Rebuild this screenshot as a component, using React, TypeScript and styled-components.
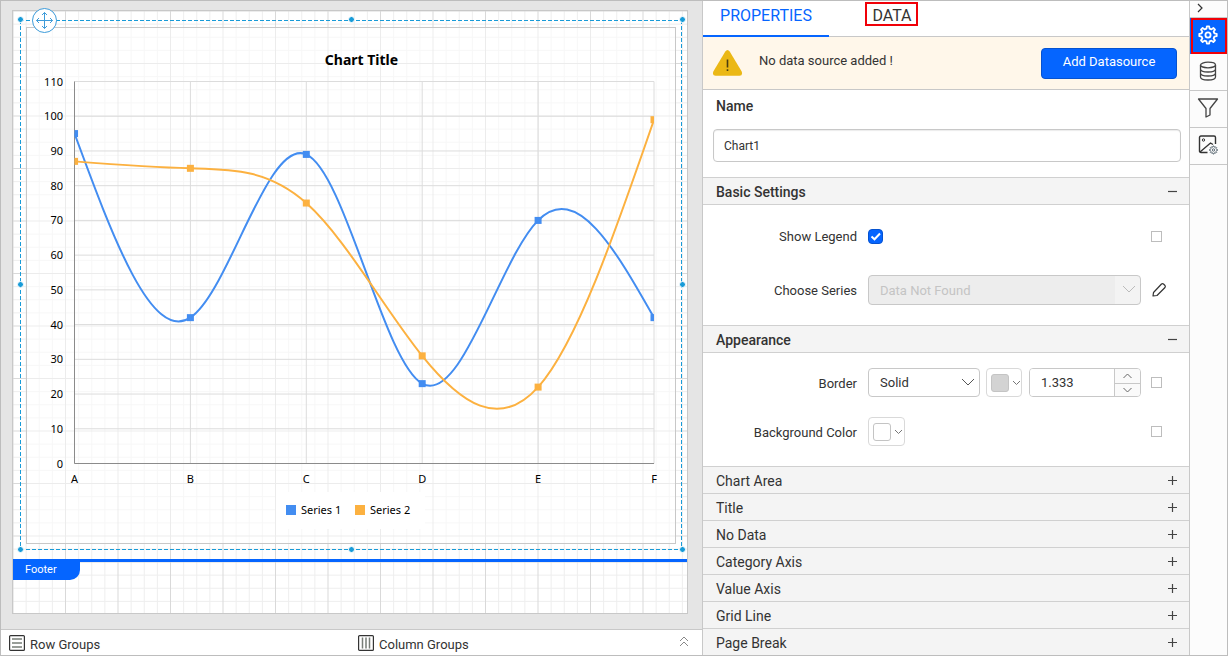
import React, { useId, useState } from "react";
import styled, { createGlobalStyle, css } from "styled-components";

const GlobalStyle = createGlobalStyle`
  *, *::before, *::after { box-sizing: border-box; }
  body { margin: 0; background: #fff; color: #333; font-family: Roboto, "Liberation Sans", sans-serif; font-size: 13px; }
  button, input, select { font: inherit; color: inherit; margin: 0; }
  button { cursor: pointer; padding: 0; border: 0; background: none; }
`;

const line = "#c8c8c8";
const blue = "#0565ff";

/* ---------- Shell ---------- */

const Shell = styled.div`
  display: flex;
  min-height: 100vh;
  border: 1px solid #bdbdbd;
`;

const Workspace = styled.main`
  flex: 1;
  min-width: 0;
  display: flex;
  flex-direction: column;
`;

const Canvas = styled.div`
  flex: 1;
  padding: 9px 14px 15px 11px;
  background: #e5e5e5;
`;

const Paper = styled.div`
  border: 1px solid ${line};
  background: #fff;
`;

const Band = styled.section`
  position: relative;
`;

const BodyBand = styled(Band)`
  padding: 9px 5px 9px 7px;
`;

const FooterBand = styled(Band)`
  height: 54px;
  border-top: 3px solid ${blue};
`;

const FooterTag = styled.div`
  position: relative;
  width: 67px;
  height: 18px;
  padding-left: 12px;
  border-bottom-right-radius: 10px;
  background: ${blue};
  color: #fff;
  font-size: 11px;
  line-height: 15px;
`;

const GridSvg = styled.svg`
  position: absolute;
  inset: 0;
  width: 100%;
  height: 100%;
`;

const dash = (angle: string) =>
  `repeating-linear-gradient(${angle}, #189bd8 0 4px, transparent 4px 6px)`;

const Selection = styled.div`
  position: relative;
  padding: 7px 6px 6px;
  background:
    ${dash("90deg")} top / 100% 1px no-repeat,
    ${dash("90deg")} bottom / 100% 1px no-repeat,
    ${dash("180deg")} left / 1px 100% no-repeat,
    ${dash("180deg")} right / 1px 100% no-repeat;
`;

const Handle = styled.span<{ $x: string; $y: string }>`
  position: absolute;
  left: ${(p) => p.$x};
  top: ${(p) => p.$y};
  width: 7px;
  height: 7px;
  margin: -4px 0 0 -3px;
  border: 1px solid #fff;
  border-radius: 50%;
  background: #189bd8;
`;

const MoveHandle = styled.button`
  position: absolute;
  left: 12px;
  top: -12px;
  width: 25px;
  height: 25px;
  svg { display: block; }
`;

const ChartFrame = styled.div`
  border: 1px solid ${line};
  background: rgba(255, 255, 255, 0.5);
  svg { display: block; width: 100%; height: auto; }
`;

const AxisText = styled.text`
  font-family: "Noto Sans", sans-serif;
  font-size: 11px;
  fill: #000;
`;

const TitleText = styled.text`
  font-family: "Noto Sans", sans-serif;
  font-size: 14px;
  font-weight: 700;
  fill: #000;
`;

const GroupBar = styled.div`
  position: relative;
  display: grid;
  grid-template-columns: 1fr 1fr;
  height: 26px;
  padding-right: 3px;
  border-top: 1px solid ${line};
  background: #fff;
`;

const Group = styled.div`
  display: flex;
  align-items: center;
  gap: 5px;
  padding: 4px 8px 0;
  line-height: 16px;
  svg { margin-top: -4px; }
`;

const CollapseButton = styled.button`
  position: absolute;
  right: 12px;
  top: 5px;
  width: 12px;
  height: 14px;
  svg { display: block; }
`;

/* ---------- Property panel ---------- */

const Panel = styled.aside`
  display: flex;
  flex-direction: column;
  width: 488px;
  flex: none;
  border: solid ${line};
  border-width: 0 1px;
  background: #fff;
`;

const Tabs = styled.div`
  display: flex;
  height: 36px;
  flex: none;
  border-bottom: 1px solid ${line};
`;

const Tab = styled.button<{ $active?: boolean }>`
  position: relative;
  width: 126px;
  height: 36px;
  padding-bottom: 8px;
  font-size: 16px;
  ${(p) => p.$active && css`
    color: ${blue};
    border-bottom: 2px solid ${blue};
    padding-bottom: 6px;
  `}
`;

const TabMark = styled.span`
  position: absolute;
  inset: 1px 37px 11px 36px;
  border: 2px solid #f00008;
`;

const Banner = styled.div`
  display: flex;
  align-items: center;
  gap: 16px;
  height: 53px;
  flex: none;
  padding: 0 12px 0 10px;
  border-bottom: 1px solid ${line};
  background: #fff7ea;
`;

const BannerText = styled.p`
  flex: 1;
  margin: 0;
  padding-bottom: 6px;
`;

const PrimaryButton = styled.button`
  width: 136px;
  height: 31px;
  padding-bottom: 3px;
  border: 1px solid #0552d0;
  border-radius: 4px;
  background: ${blue};
  color: #fff;
`;

const NameField = styled.div`
  display: flex;
  flex-direction: column;
  gap: 15px;
  padding: 8px 8px 15px 10px;
  label { padding-left: 3px; font-size: 14px; font-weight: 500; line-height: 16px; }
`;

const TextInput = styled.input`
  width: 100%;
  height: 33px;
  padding: 0 10px;
  border: 1px solid ${line};
  border-radius: 4px;
  box-shadow: inset 0 1px 1px rgba(0, 0, 0, 0.08);
  font-size: 12px;
`;

const SectionHead = styled.button<{ $open?: boolean }>`
  display: flex;
  align-items: center;
  justify-content: space-between;
  width: 100%;
  padding: 1px 12px 0 13px;
  border-top: 1px solid #d0d0d0;
  background: #f4f4f4;
  font-size: 14px;
  line-height: 16px;
  text-align: left;
  ${(p) => p.$open
    ? css`
      flex: none;
      height: 28px;
      border-bottom: 1px solid #d0d0d0;
      font-weight: 500;
    `
    : css`
      flex: 1;
      min-height: 27px;
      max-height: 28px;
    `}
  svg { flex: none; }
`;

const SectionBody = styled.div<{ $roomy?: boolean }>`
  display: grid;
  ${(p) => p.$roomy
    ? css`gap: 24px; padding: 16px 0 20px; grid-auto-rows: 30px;`
    : css`gap: 20px; padding: 15px 0 20px; grid-auto-rows: 29px;`}
`;

const Row = styled.div`
  display: grid;
  grid-template-columns: 154px 11px 1fr 10px 16px;
  align-items: center;
  padding-right: 22px;
`;

const Label = styled.label`
  padding-top: 2px;
  text-align: right;
  line-height: 16px;
`;

const Controls = styled.div`
  grid-column: 3;
  display: flex;
  align-items: center;
`;

const Trailing = styled.div`
  grid-column: 5;
  display: flex;
  align-items: center;
`;

const Check = styled.input`
  appearance: none;
  width: 15px;
  height: 15px;
  border: 1px solid #0552d0;
  border-radius: 4px;
  background: ${blue};
`;

const CheckWrap = styled.span`
  position: relative;
  display: flex;
  svg { position: absolute; inset: 0; pointer-events: none; }
  input:not(:checked) { background: #fff; }
`;

const ResetBox = styled.input`
  appearance: none;
  width: 11px;
  height: 11px;
  border: 1px solid #bdbdbd;
  background: #fff;
`;

const SelectWrap = styled.span<{ $wide?: boolean }>`
  position: relative;
  display: flex;
  ${(p) => (p.$wide ? "flex: 1;" : "width: 112px; margin-right: 6px;")}
`;

const Select = styled.select`
  appearance: none;
  width: 100%;
  height: 29px;
  padding: 0 30px 0 11px;
  border: 1px solid ${line};
  border-radius: 4px;
  background: #fff;
  &:disabled {
    height: 30px;
    background: linear-gradient(#f3f3f3, #f3f3f3) right / 25px 100% no-repeat #ededed;
    color: #c4c4c4;
    opacity: 1;
  }
`;

const SelectArrow = styled.svg`
  position: absolute;
  right: 5px;
  top: 10px;
  pointer-events: none;
`;

const ColorButton = styled.button<{ $width: number }>`
  display: flex;
  align-items: center;
  gap: 3px;
  width: ${(p) => p.$width}px;
  height: 29px;
  padding-left: 4px;
  margin-right: 7px;
  border: 1px solid #d9d9d9;
  border-radius: 4px;
`;

const Swatch = styled.span<{ $color: string }>`
  width: 18px;
  height: 18px;
  border: 1px solid #c4c4c4;
  border-radius: 3px;
  background: ${(p) => p.$color};
`;

const Stepper = styled.span`
  display: grid;
  grid-template-columns: 1fr 26px;
  grid-template-rows: 14px 13px;
  flex: 1;
  min-width: 0;
  height: 29px;
  border: 1px solid ${line};
  border-radius: 4px;
  overflow: hidden;
  input {
    grid-row: 1 / 3;
    min-width: 0;
    width: 100%;
    padding: 0 11px;
    border: 0;
    appearance: textfield;
  }
  input::-webkit-inner-spin-button { appearance: none; }
  button {
    display: flex;
    align-items: center;
    justify-content: center;
    border-left: 1px solid ${line};
    background: #fafafa;
  }
  button + button { border-top: 1px solid ${line}; }
`;

const IconButton = styled.button`
  display: flex;
`;

/* ---------- Tool rail ---------- */

const Rail = styled.nav`
  width: 37px;
  flex: none;
  background: #fcfcfc;
`;

const RailToggle = styled.button`
  display: flex;
  align-items: center;
  width: 100%;
  height: 17px;
  padding: 0 0 2px 7px;
  border-bottom: 1px solid ${line};
`;

const RailItem = styled.button<{ $active?: boolean }>`
  position: relative;
  display: flex;
  align-items: center;
  justify-content: center;
  width: 100%;
  height: 37px;
  padding: 0 2px 2px 0;
  border-bottom: 1px solid ${line};
  ${(p) => p.$active && css`
    height: 36px;
    border-bottom: 0;
    background: ${blue};
  `}
`;

const RailMark = styled.span`
  position: absolute;
  inset: 0 0 0 1px;
  border: 2px solid #f00008;
`;

/* ---------- Icons ---------- */

const Chevron = ({ w = 13, h = 8, color = "#777" }) => (
  <svg width={w} height={h} viewBox={`0 0 ${w} ${h}`} fill="none" stroke={color}>
    <path d={`M1 1 L${w / 2} ${h - 1.5} L${w - 1} 1`} />
  </svg>
);

const Toggle = ({ open }: { open?: boolean }) => (
  <svg width="9" height="10" viewBox="0 0 9 10" fill="none" stroke="#444" strokeWidth={1.2}>
    <path d={open ? "M0 4.5H9" : "M0 4.5H9M4.5 0V9"} />
  </svg>
);

const gearPath = (cx: number, cy: number, outer: number, inner: number) => {
  const teeth = 8;
  const points: string[] = [];
  for (let i = 0; i < teeth; i++) {
    [[-0.3, inner], [-0.17, outer], [0.17, outer], [0.3, inner]].forEach(([o, r]) => {
      const a = ((i + o) / teeth) * Math.PI * 2;
      points.push(`${(cx + r * Math.sin(a)).toFixed(2)} ${(cy - r * Math.cos(a)).toFixed(2)}`);
    });
  }
  return `M${points.join("L")}Z`;
};

const GearIcon = () => (
  <svg width="20" height="20" viewBox="0 0 20 20" fill="none" stroke="#fff" strokeWidth={1.8} strokeLinejoin="round">
    <path d={gearPath(10, 10, 8.8, 6.6)} />
    <circle cx="10" cy="10" r="2.6" />
  </svg>
);

const DatabaseIcon = () => (
  <svg width="18" height="20" viewBox="0 0 18 20" fill="none" stroke="#444" strokeWidth={1.3}>
    <ellipse cx="9" cy="4" rx="7.5" ry="2.8" />
    <path d="M1.5 4V16C1.5 20 16.5 20 16.5 16V4M1.5 8C1.5 12 16.5 12 16.5 8M1.5 12C1.5 16 16.5 16 16.5 12" />
  </svg>
);

const FilterIcon = () => (
  <svg width="22" height="20" viewBox="0 0 22 20" fill="none" stroke="#444" strokeWidth={1.3} strokeLinejoin="round">
    <path d="M1.5 1H20.5L13 10.5V17L9 19V10.5Z" />
  </svg>
);

const ImageGearIcon = () => (
  <svg width="20" height="20" viewBox="0 0 20 20" fill="none" stroke="#333" strokeWidth={1.4}>
    <path d="M9.500 17.500H3Q1.500 17.500 1.500 16V2.500Q1.500 1 3 1H16Q17.500 1 17.500 2.500V9" />
    <circle cx="5.500" cy="5" r="1.200" strokeWidth="1" />
    <path d="M2 17L12.500 8L15 9.500" />
    <path d={gearPath(15.5, 15, 4, 3)} stroke="#5d6b75" strokeWidth="1" />
    <circle cx="15.500" cy="15" r="1.200" stroke="#5d6b75" strokeWidth="1" />
  </svg>
);

const PencilIcon = () => (
  <svg width="16" height="16" viewBox="0 0 16 16" fill="none" stroke="#333" strokeWidth={1.2} strokeLinejoin="round">
    <path d="M2 14L2.500 10.500L10.500 2Q11.500 1.200 12.500 2L14 3.500Q14.700 4.500 14 5.500L6 13.500Z" />
  </svg>
);

const WarningIcon = () => (
  <svg width="30" height="28" viewBox="0 0 30 28">
    <path d="M12.300 2.500Q14.500 -.5 16.700 2.500L28.700 22.500Q30 26.500 26.500 26.700H2.500Q-1 26.500 .3 22.500Z" fill="#ebb815" />
    <path d="M14.500 10.500V18.500M14.500 20.200V22" stroke="#4b3e10" strokeWidth="1.600" />
  </svg>
);

const GroupIcon = ({ vertical }: { vertical?: boolean }) => (
  <svg width="16" height="16" viewBox="1 1 16 16" fill="none" stroke="#333">
    <rect x="1.600" y="1.600" width="14.800" height="14.800" rx="1" strokeWidth="1.200" />
    <path
      d={vertical ? "M5.500 3.500V14.500M9 3.500V14.500M12.500 3.500V14.500" : "M4 5H14M4 9H14M4 13H14"}
      stroke="#777d77"
      strokeWidth="1.500"
    />
  </svg>
);

const MoveIcon = () => (
  <svg width="25" height="25" viewBox="0 0 25 25" fill="none" stroke="#3d9bd9">
    <circle cx="12.500" cy="12.500" r="12" fill="#fff" />
    <path d="M12.500 4.500V20.500M4.500 12.500H20.500M10 7L12.500 4.500L15 7M10 18L12.500 20.500L15 18M7 10L4.500 12.500L7 15M18 10L20.500 12.500L18 15" />
  </svg>
);

/* ---------- Design grid ---------- */

const DesignGrid = () => {
  const id = useId();
  const cell = 13.125;
  const minor = [1, 2, 3, 5, 6, 7].map((n) => n * cell);
  return (
    <GridSvg aria-hidden="true">
      <defs>
        <pattern id={id} width="105" height="105" patternUnits="userSpaceOnUse">
          {minor.map((p) => (
            <path key={p} d={`M${p} 0V105M0 ${p}H105`} stroke="#eeeeee" />
          ))}
          {[0, 52.5, 105].map((p) => (
            <path key={p} d={`M${p} 0V105M0 ${p}H105`} stroke="#d9d9d9" />
          ))}
        </pattern>
      </defs>
      <rect width="100%" height="100%" fill={`url(#${id})`} />
    </GridSvg>
  );
};

/* ---------- Chart ---------- */

const plot = { left: 47.5, top: 53.5, width: 579.5, height: 382 };
const categories = ["A", "B", "C", "D", "E", "F"];
const series = [
  { name: "Series 1", color: "#438df1", values: [95, 42, 89, 23, 70, 42] },
  { name: "Series 2", color: "#fcb140", values: [87, 85, 75, 31, 22, 99] },
];
const ticks = Array.from({ length: 12 }, (_, i) => i * 10);
const step = plot.width / (categories.length - 1);
const px = (i: number) => plot.left + i * step;
const py = (v: number) => plot.top + plot.height * (1 - v / 110);

/* Natural cubic spline through evenly spaced values, as Bezier segments. */
const splinePath = (v: number[]) => {
  const n = v.length;
  const m = new Array(n).fill(0);
  for (let pass = 0; pass < 60; pass++) {
    for (let i = 1; i < n - 1; i++) {
      m[i] = (6 * (v[i - 1] - 2 * v[i] + v[i + 1]) - m[i - 1] - m[i + 1]) / 4;
    }
  }
  let d = `M${px(0)} ${py(v[0])}`;
  for (let i = 0; i < n - 1; i++) {
    const rise = v[i + 1] - v[i];
    const start = rise - (2 * m[i] + m[i + 1]) / 6;
    const end = rise + (m[i] + 2 * m[i + 1]) / 6;
    d += `C${px(i + 1 / 3)} ${py(v[i] + start / 3)} ${px(i + 2 / 3)} ${py(v[i + 1] - end / 3)} ${px(i + 1)} ${py(v[i + 1])}`;
  }
  return d;
};

const Chart = () => (
  <svg viewBox="0 0 648 515" role="img" aria-label="Chart Title">
    <defs>
      <clipPath id="plot-area">
        <rect x={plot.left} y={plot.top} width={plot.width} height={plot.height} />
      </clipPath>
    </defs>
    <TitleText x="334.500" y="37" textAnchor="middle">Chart Title</TitleText>
    {ticks.map((t) => (
      <g key={t}>
        <path d={`M${plot.left} ${py(t)}H${plot.left + plot.width}`} stroke="#dcdcdc" />
        <AxisText x="36" y={py(t) + 4} textAnchor="end">{t}</AxisText>
      </g>
    ))}
    {categories.map((c, i) => (
      <g key={c}>
        <path d={`M${px(i)} ${plot.top}V${plot.top + plot.height}`} stroke="#dcdcdc" />
        <AxisText x={px(i)} y="455" textAnchor="middle">{c}</AxisText>
      </g>
    ))}
    <path
      d={`M${plot.left} ${plot.top}V${plot.top + plot.height}H${plot.left + plot.width}`}
      fill="none"
      stroke="#8b8b8b"
    />
    <g clipPath="url(#plot-area)">
      {series.map((s) => (
        <g key={s.name}>
          <path d={splinePath(s.values)} fill="none" stroke={s.color} strokeWidth="2" />
          {s.values.map((v, i) => (
            <rect key={i} x={px(i) - 3.5} y={py(v) - 3.5} width="7" height="7" fill={s.color} />
          ))}
        </g>
      ))}
    </g>
    <rect x="249" y="464" width="149" height="37" fill="#fff" />
    {series.map((s, i) => (
      <g key={s.name}>
        <rect x={259 + i * 69} y="477" width="10" height="10" fill={s.color} />
        <AxisText x={274 + i * 69} y="486">{s.name}</AxisText>
      </g>
    ))}
  </svg>
);

const handles = [
  ["0%", "0%"], ["50%", "0%"], ["100%", "0%"],
  ["0%", "50%"], ["100%", "50%"],
  ["0%", "100%"], ["50%", "100%"], ["100%", "100%"],
];

const closedSections = ["Chart Area", "Title", "No Data", "Category Axis", "Value Axis", "Grid Line", "Page Break"];

export default function App() {
  const [name, setName] = useState("Chart1");
  const [legend, setLegend] = useState(true);
  const [width, setWidth] = useState(1.333);

  return (
    <>
      <GlobalStyle />
      <Shell>
        <Workspace>
          <Canvas>
            <Paper>
              <BodyBand>
                <DesignGrid />
                <Selection>
                  <ChartFrame>
                    <Chart />
                  </ChartFrame>
                  {handles.map(([x, y]) => (
                    <Handle key={x + y} $x={x} $y={y} />
                  ))}
                  <MoveHandle aria-label="Move chart"><MoveIcon /></MoveHandle>
                </Selection>
              </BodyBand>
              <FooterBand>
                <DesignGrid />
                <FooterTag>Footer</FooterTag>
              </FooterBand>
            </Paper>
          </Canvas>
          <GroupBar>
            <Group><GroupIcon />Row Groups</Group>
            <Group><GroupIcon vertical />Column Groups</Group>
            <CollapseButton aria-label="Expand groups">
              <svg width="12" height="14" viewBox="0 0 12 14" fill="none" stroke="#888">
                <path d="M2 6L6 2L10 6M2 11L6 7L10 11" />
              </svg>
            </CollapseButton>
          </GroupBar>
        </Workspace>

        <Panel>
          <Tabs role="tablist">
            <Tab role="tab" aria-selected="true" $active>PROPERTIES</Tab>
            <Tab role="tab" aria-selected="false">DATA<TabMark /></Tab>
          </Tabs>
          <Banner>
            <WarningIcon />
            <BannerText>No data source added !</BannerText>
            <PrimaryButton>Add Datasource</PrimaryButton>
          </Banner>
          <NameField>
            <label htmlFor="item-name">Name</label>
            <TextInput id="item-name" value={name} onChange={(e) => setName(e.target.value)} />
          </NameField>

          <SectionHead $open aria-expanded="true">Basic Settings<Toggle open /></SectionHead>
          <SectionBody $roomy>
            <Row>
              <Label htmlFor="show-legend">Show Legend</Label>
              <Controls>
                <CheckWrap>
                  <Check id="show-legend" type="checkbox" checked={legend} onChange={(e) => setLegend(e.target.checked)} />
                  <svg width="15" height="15" viewBox="0 0 15 15" fill="none" stroke="#fff" strokeWidth="2">
                    <path d="M3.500 7.500L6.500 10.300L12 4.500" />
                  </svg>
                </CheckWrap>
              </Controls>
              <Trailing><ResetBox type="checkbox" aria-label="Advanced: Show Legend" /></Trailing>
            </Row>
            <Row>
              <Label htmlFor="choose-series">Choose Series</Label>
              <Controls>
                <SelectWrap $wide>
                  <Select id="choose-series" disabled><option>Data Not Found</option></Select>
                  <SelectArrow width="14" height="9" fill="none" stroke="#bbb"><path d="M1 1L7 7L13 1" /></SelectArrow>
                </SelectWrap>
              </Controls>
              <Trailing><IconButton aria-label="Edit series"><PencilIcon /></IconButton></Trailing>
            </Row>
          </SectionBody>

          <SectionHead $open aria-expanded="true">Appearance<Toggle open /></SectionHead>
          <SectionBody>
            <Row>
              <Label htmlFor="border-style">Border</Label>
              <Controls>
                <SelectWrap>
                  <Select id="border-style"><option>Solid</option></Select>
                  <SelectArrow width="14" height="9" fill="none" stroke="#555"><path d="M1 1L7 7L13 1" /></SelectArrow>
                </SelectWrap>
                <ColorButton $width={36} aria-label="Border color"><Swatch $color="#d3d3d3" /><Chevron w={9} h={6} /></ColorButton>
                <Stepper>
                  <input type="number" step="any" aria-label="Border width" value={width} onChange={(e) => setWidth(Number(e.target.value))} />
                  <button aria-label="Increase" onClick={() => setWidth(width + 1)}>
                    <svg width="9" height="6" fill="none" stroke="#666"><path d="M.5 5L4.500 1L8.500 5" /></svg>
                  </button>
                  <button aria-label="Decrease" onClick={() => setWidth(width - 1)}>
                    <svg width="9" height="6" fill="none" stroke="#666"><path d="M.5 1L4.500 5L8.500 1" /></svg>
                  </button>
                </Stepper>
              </Controls>
              <Trailing><ResetBox type="checkbox" aria-label="Advanced: Border" /></Trailing>
            </Row>
            <Row>
              <Label as="span">Background Color</Label>
              <Controls>
                <ColorButton $width={37} aria-label="Background color"><Swatch $color="#fff" /><Chevron w={9} h={6} /></ColorButton>
              </Controls>
              <Trailing><ResetBox type="checkbox" aria-label="Advanced: Background Color" /></Trailing>
            </Row>
          </SectionBody>

          {closedSections.map((title) => (
            <SectionHead key={title} aria-expanded="false">{title}<Toggle /></SectionHead>
          ))}
        </Panel>

        <Rail>
          <RailToggle aria-label="Collapse panel">
            <svg width="7" height="10" fill="none" stroke="#333" strokeWidth="1.200"><path d="M1 1L5 5L1 9" /></svg>
          </RailToggle>
          <RailItem $active aria-label="Properties"><GearIcon /><RailMark /></RailItem>
          <RailItem aria-label="Data"><DatabaseIcon /></RailItem>
          <RailItem aria-label="Filter"><FilterIcon /></RailItem>
          <RailItem aria-label="Image settings"><ImageGearIcon /></RailItem>
        </Rail>
      </Shell>
    </>
  );
}
